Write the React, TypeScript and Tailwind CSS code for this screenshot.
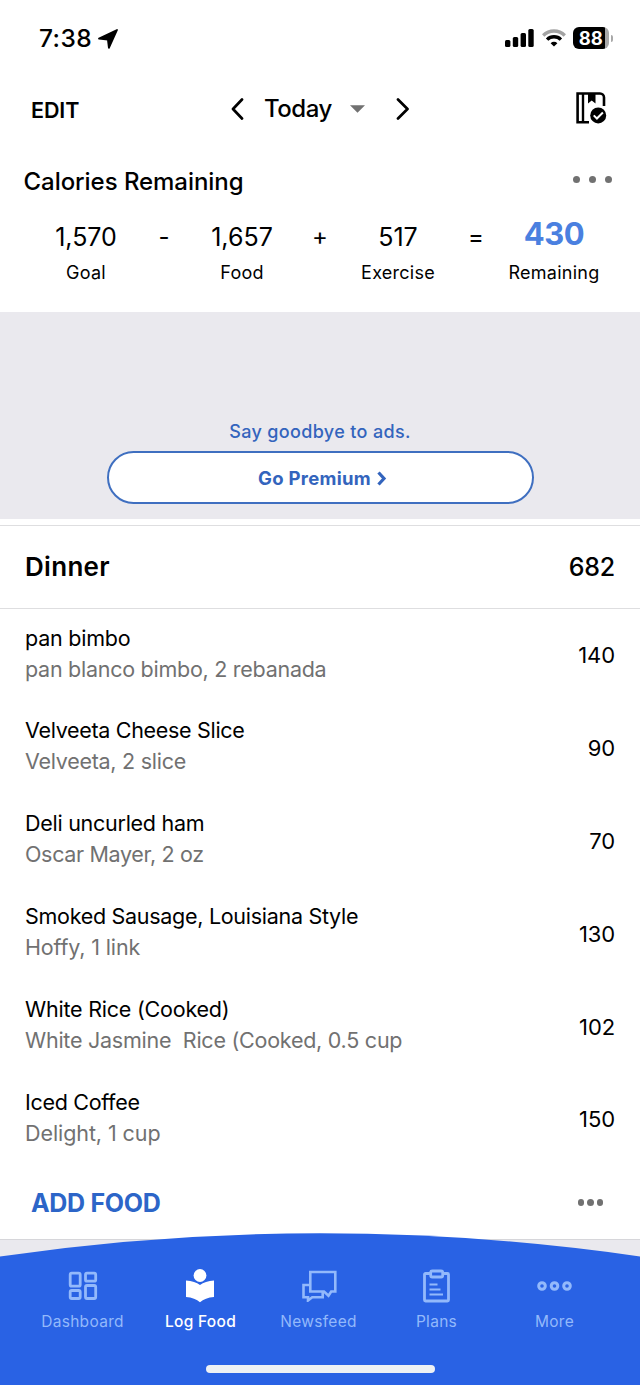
import { ReactNode } from 'react';

interface Food {
  name: string;
  detail: string;
  calories: number;
  nameSpacing: string;
  detailSpacing: string;
}

const foods: Food[] = [
  { name: 'pan bimbo', detail: 'pan blanco bimbo, 2 rebanada', calories: 140, nameSpacing: 'tracking-[-0.22px]', detailSpacing: 'tracking-[-0.27px]' },
  { name: 'Velveeta Cheese Slice', detail: 'Velveeta, 2 slice', calories: 90, nameSpacing: 'tracking-[-0.31px]', detailSpacing: 'tracking-[-0.27px]' },
  { name: 'Deli uncurled ham', detail: 'Oscar Mayer, 2 oz', calories: 70, nameSpacing: 'tracking-[-0.27px]', detailSpacing: 'tracking-[-0.33px]' },
  { name: 'Smoked Sausage, Louisiana Style', detail: 'Hoffy, 1 link', calories: 130, nameSpacing: 'tracking-[-0.29px]', detailSpacing: 'tracking-[-0.15px]' },
  { name: 'White Rice (Cooked)', detail: 'White Jasmine  Rice (Cooked, 0.5 cup', calories: 102, nameSpacing: 'tracking-[-0.22px]', detailSpacing: 'tracking-[-0.25px]' },
  { name: 'Iced Coffee', detail: 'Delight, 1 cup', calories: 150, nameSpacing: 'tracking-[-0.3px]', detailSpacing: 'tracking-[-0.08px]' },
];

function StatusBar() {
  return (
    <div className="flex h-[76px] items-center justify-between pl-[39px] pr-[27px]">
      <div className="flex items-center gap-[7px]">
        <span className="w-[52px] whitespace-nowrap text-[24.5px] font-medium tracking-[0.4px]">7:38</span>
        <svg className="mt-0.5" width="20" height="20" viewBox="0 0 20 20">
          <path d="M19 1 10.9 18.8 9.9 10.7 1 9.6Z" fill="#000" stroke="#000" strokeWidth="1.8" strokeLinejoin="round" />
        </svg>
      </div>
      <div className="flex items-center">
        <svg width="29" height="18" viewBox="0 0 29 18">
          <rect x="0" y="11" width="5.4" height="7" rx="1.5" />
          <rect x="7.8" y="8" width="5.4" height="10" rx="1.5" />
          <rect x="15.6" y="4" width="5.4" height="14" rx="1.5" />
          <rect x="23.3" y="0" width="5.4" height="18" rx="1.5" />
        </svg>
        <svg className="ml-2" width="24" height="18" viewBox="0 0 24 18" fill="none" strokeWidth="3.4">
          <path d="M1.2 6.4a15.6 15.6 0 0 1 21.6 0" stroke="#a3a3a3" />
          <path d="M5.1 10.6a9.8 9.8 0 0 1 13.8 0" stroke="#000" />
          <path d="M12 17.6 8.6 14.2a4.9 4.9 0 0 1 6.8 0Z" fill="#000" />
        </svg>
        <div className="ml-[7px] flex h-[22px] w-[36.5px] items-center justify-center overflow-hidden rounded-[6px] bg-[linear-gradient(to_right,#000_88%,#a8a8a8_88%)] text-[18.5px] font-bold leading-none text-white">
          88
        </div>
        <div className="ml-[2px] h-[7px] w-[2px] rounded-r-full bg-[#a8a8a8]" />
      </div>
    </div>
  );
}

function Header() {
  return (
    <div className="flex h-[66px] items-center pl-[31px] pr-[33px]">
      <span className="mt-[3px] w-[200px] text-[21.5px] font-semibold tracking-[-0.1px]">EDIT</span>
      <svg width="13" height="22" viewBox="0 0 13 22" fill="none" stroke="#000" strokeWidth="2.7" strokeLinecap="round" strokeLinejoin="round">
        <path d="M11 1.5 2 11l9 9.5" />
      </svg>
      <span className="ml-[20px] w-[69px] whitespace-nowrap text-[24px] font-medium tracking-[-0.5px]">Today</span>
      <svg className="ml-[17px]" width="15" height="8" viewBox="0 0 15 8">
        <path d="M0 .3h15L7.5 7.7Z" fill="#717171" />
      </svg>
      <svg className="ml-[31px]" width="14" height="22" viewBox="0 0 14 22" fill="none" stroke="#000" strokeWidth="2.7" strokeLinecap="round" strokeLinejoin="round">
        <path d="m2 1.5 9.5 9.5L2 20.5" />
      </svg>
      <svg className="ml-auto -mt-0.5" width="31" height="32" viewBox="0 0 31 32" fill="none" stroke="#000" strokeWidth="2.6">
        <path d="M13 30.2H1.6V1.5H24a4 4 0 0 1 4 4v8.5" />
        <path d="M7 1.5v28" strokeWidth="2.4" />
        <path d="M12 1h7.5v10.6l-3.8-3-3.7 3Z" fill="#000" stroke="none" />
        <circle cx="22.2" cy="23.4" r="8" fill="#000" stroke="none" />
        <path d="m17.7 23.4 3.2 3.1 6-6" stroke="#fff" strokeWidth="2" />
      </svg>
    </div>
  );
}

function Amount({ value, label }: { value: string; label: string }) {
  return (
    <div className="flex w-[100px] flex-col items-center">
      <span className="text-[25px] leading-[30px]">{value}</span>
      <span className="mt-[9px] text-[18px] leading-6 tracking-[0.25px]">{label}</span>
    </div>
  );
}

function Operator({ children }: { children: string }) {
  return <span className="w-[56px] text-center text-[24px] leading-[30px]">{children}</span>;
}

function CalorieSummary() {
  return (
    <div className="h-[170px] pt-6">
      <div className="flex h-[31px] items-center justify-between pl-[23.5px] pr-[28px]">
        <h2 className="text-[24px] font-medium tracking-[-0.05px]">Calories Remaining</h2>
        <div className="mt-[-4px] flex gap-[9px]">
          <span className="size-[7px] rounded-full bg-[#717171]" />
          <span className="size-[7px] rounded-full bg-[#717171]" />
          <span className="size-[7px] rounded-full bg-[#717171]" />
        </div>
      </div>
      <div className="mt-[25px] flex pl-[36px]">
        <Amount value="1,570" label="Goal" />
        <Operator>-</Operator>
        <Amount value="1,657" label="Food" />
        <Operator>+</Operator>
        <Amount value="517" label="Exercise" />
        <Operator>=</Operator>
        <div className="flex w-[100px] flex-col items-center">
          <span className="-mt-[5px] text-[31px] font-bold leading-[34px] tracking-[-0.5px] text-[#4a80e0]">430</span>
          <span className="mt-[10px] text-[18px] leading-6 tracking-[0.25px]">Remaining</span>
        </div>
      </div>
    </div>
  );
}

function PremiumBanner() {
  return (
    <div className="flex h-[207px] flex-col items-center bg-[#eae9ee] pt-[108px] text-[#3364bd]">
      <p className="text-[18px] font-medium leading-6 tracking-[0.35px]">Say goodbye to ads.</p>
      <button className="mt-[7px] flex h-[53px] w-[427px] items-center justify-center rounded-full border-2 border-[#3f6fc0] bg-white pl-[5px] pt-[2px] text-[18.5px] font-bold tracking-[0.3px]">
        Go Premium
        <svg className="ml-[6px]" width="10" height="15" viewBox="0 0 10 15" fill="none" stroke="currentColor" strokeWidth="3.2">
          <path d="m1.5 1.5 5.5 6-5.5 6" />
        </svg>
      </button>
    </div>
  );
}

function FoodRow({ food }: { food: Food }) {
  return (
    <div className="flex h-[92.8px] items-center justify-between px-[25px]">
      <div className="pb-[3.6px]">
        <p className={`text-[21.5px] leading-[31px] ${food.nameSpacing}`}>{food.name}</p>
        <p className={`whitespace-pre text-[21.5px] leading-[31px] text-[#717171] ${food.detailSpacing}`}>{food.detail}</p>
      </div>
      <span className="pt-px text-[22px] tracking-[-0.1px]">{food.calories}</span>
    </div>
  );
}

function NavItem({ label, active, children }: { label: string; active?: boolean; children: ReactNode }) {
  return (
    <div className={`flex w-[118px] flex-col items-center ${active ? 'font-medium text-white' : 'text-[#93b9fb]'}`}>
      <div className="flex h-9 items-center">{children}</div>
      <span className="mt-[6px] text-[15.5px] leading-6 tracking-[0.3px]">{label}</span>
    </div>
  );
}

function BottomNav() {
  return (
    <div className="relative h-[146px] border-t border-[#d6d6da] bg-[#eae9ee]">
      {/* the bar bulges upward over the end of the list */}
      <svg className="absolute -top-[7px] left-0" width="640" height="153" viewBox="0 0 640 153">
        <path d="M0 23.5A2237 2237 0 0 1 640 23.5V153H0Z" fill="#2962e4" />
      </svg>
      <nav className="relative flex h-full flex-col items-center pt-[28px]">
        <div className="flex w-full pl-[23.5px]">
          <NavItem label="Dashboard">
            <svg className="ml-px" width="30" height="30" viewBox="0 0 30 30" fill="none" stroke="currentColor" strokeWidth="2.8">
              <rect x="2.2" y="2.2" width="10" height="13" rx="1.5" />
              <rect x="17.5" y="2.2" width="10.2" height="8" rx="1.5" />
              <rect x="2.2" y="19.5" width="10" height="8" rx="1.5" />
              <rect x="17.5" y="14.5" width="10.2" height="13" rx="1.5" />
            </svg>
          </NavItem>
          <NavItem label="Log Food" active>
            <svg className="mr-px" width="28" height="34" viewBox="0 0 28 34" fill="currentColor">
              <circle cx="14" cy="6.5" r="6.4" />
              <path d="M0 11.5q9 .5 14 4.6 5-4.1 14-4.6V28q-9 .7-14 5.2Q9 28.7 0 28Z" />
            </svg>
          </NavItem>
          <NavItem label="Newsfeed">
            <svg className="ml-px" width="35" height="32" viewBox="0 0 35 32" fill="none" stroke="currentColor" strokeWidth="2.6">
              <path d="M8.3 2h25v19.5h-4.1l-2.7 4.3-4.5-4.3H8.3Z" />
              <path d="M8.3 15H1.5v12.3H6v3.2l4.2-3.2h10.5V22" />
            </svg>
          </NavItem>
          <NavItem label="Plans">
            <svg width="27" height="34" viewBox="0 0 27 34" fill="none" stroke="currentColor" strokeWidth="2.8">
              <path d="M8 4.5H2.5a1 1 0 0 0-1 1V31a1 1 0 0 0 1 1h22a1 1 0 0 0 1-1V5.5a1 1 0 0 0-1-1H19" />
              <rect x="7.7" y="2" width="12" height="6" rx="1.5" />
              <path d="M6.5 15.5h8M6.5 20.5h11M6.5 25.5h13.5" strokeWidth="2.2" />
            </svg>
          </NavItem>
          <NavItem label="More">
            <svg width="35" height="10" viewBox="0 0 35 10" fill="none" stroke="currentColor" strokeWidth="3">
              <circle cx="5" cy="5" r="3.3" />
              <circle cx="17.5" cy="5" r="3.3" />
              <circle cx="30" cy="5" r="3.3" />
            </svg>
          </NavItem>
        </div>
        <div className="mt-[31px] h-2 w-[229px] rounded-full bg-[#eef1f4]" />
      </nav>
    </div>
  );
}

export default function App() {
  return (
    <div className="h-[1385px] w-[640px] overflow-hidden bg-white font-['Inter','Liberation_Sans',sans-serif] text-black">
      <StatusBar />
      <Header />
      <CalorieSummary />
      <PremiumBanner />
      <div className="mt-[6px] flex h-[84px] items-center justify-between border-y border-[#dedee0] px-[25px]">
        <h2 className="pb-px text-[26px] font-semibold tracking-[0.3px]">Dinner</h2>
        <span className="pt-px text-[25px] font-medium tracking-[-0.2px]">682</span>
      </div>
      <div>
        {foods.map((food) => (
          <FoodRow key={food.name} food={food} />
        ))}
      </div>
      <div className="flex h-[73.2px] items-center justify-between pl-[31px] pr-[37px]">
        <span className="pt-[2px] text-[25px] font-bold tracking-[-0.3px] text-[#2c65c8]">ADD FOOD</span>
        <div className="flex gap-[3px]">
          <span className="size-[6.5px] rounded-full bg-[#717171]" />
          <span className="size-[6.5px] rounded-full bg-[#717171]" />
          <span className="size-[6.5px] rounded-full bg-[#717171]" />
        </div>
      </div>
      <BottomNav />
    </div>
  );
}
